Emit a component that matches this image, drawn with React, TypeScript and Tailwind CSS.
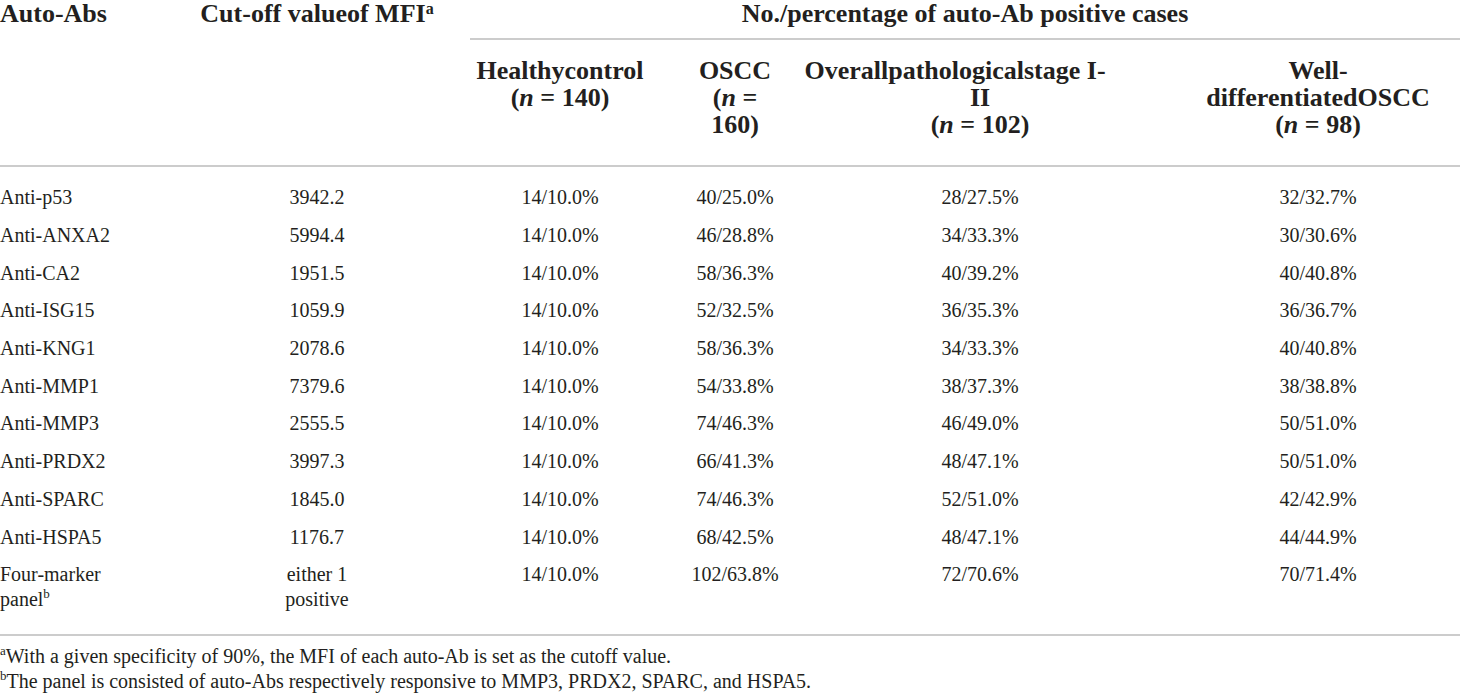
const rows: [string, string, string, string, string, string][] = [
  ['Anti-p53', '3942.2', '14/10.0%', '40/25.0%', '28/27.5%', '32/32.7%'],
  ['Anti-ANXA2', '5994.4', '14/10.0%', '46/28.8%', '34/33.3%', '30/30.6%'],
  ['Anti-CA2', '1951.5', '14/10.0%', '58/36.3%', '40/39.2%', '40/40.8%'],
  ['Anti-ISG15', '1059.9', '14/10.0%', '52/32.5%', '36/35.3%', '36/36.7%'],
  ['Anti-KNG1', '2078.6', '14/10.0%', '58/36.3%', '34/33.3%', '40/40.8%'],
  ['Anti-MMP1', '7379.6', '14/10.0%', '54/33.8%', '38/37.3%', '38/38.8%'],
  ['Anti-MMP3', '2555.5', '14/10.0%', '74/46.3%', '46/49.0%', '50/51.0%'],
  ['Anti-PRDX2', '3997.3', '14/10.0%', '66/41.3%', '48/47.1%', '50/51.0%'],
  ['Anti-SPARC', '1845.0', '14/10.0%', '74/46.3%', '52/51.0%', '42/42.9%'],
  ['Anti-HSPA5', '1176.7', '14/10.0%', '68/42.5%', '48/47.1%', '44/44.9%'],
];

const cols = 'grid grid-cols-[200px_234px_252px_98px_392px_284px]';

function N({ v }: { v: string }) {
  return (
    <>
      (<i>n</i> = {v})
    </>
  );
}

function Sup({ c }: { c: string }) {
  return <span className="text-[13px] leading-none align-[8px]">{c}</span>;
}

export default function App() {
  return (
    <div className="w-[1460px] h-[694px] bg-white text-[#231f20] font-['Liberation_Serif',serif] overflow-hidden">
      {/* header */}
      <div className={`${cols} text-[26px] leading-[27px] font-bold border-b-2 border-[#cccccc] pb-[27px]`}>
        <div className="row-span-2">Auto-Abs</div>
        <div className="row-span-2 text-center">
          Cut-off valueof MFI<span className="text-[16px] leading-none align-[8px]">a</span>
        </div>
        <div className="col-span-4 ml-[36px] text-center pb-[11px] border-b-2 border-[#cccccc]">
          No./percentage of auto-Ab positive cases
        </div>
        <div className="col-start-3 text-center pt-[17px]">
          Healthycontrol
          <br />
          <N v="140" />
        </div>
        <div className="text-center pt-[17px]">
          OSCC
          <br />
          (<i>n</i> =
          <br />
          160)
        </div>
        <div className="text-center pt-[17px]">
          <span className="inline-block -ml-[50px]">Overallpathologicalstage I-</span>
          <br />
          II
          <br />
          <N v="102" />
        </div>
        <div className="text-center pt-[17px]">
          Well-
          <br />
          differentiatedOSCC
          <br />
          <N v="98" />
        </div>
      </div>

      {/* body */}
      <div className="text-[20px] leading-[25px] pt-[12px] pb-[15px] border-b-2 border-[#cccccc]">
        {rows.map((r) => (
          <div key={r[0]} className={`${cols} py-[6.35px]`}>
            <div>{r[0]}</div>
            <div className="text-center">{r[1]}</div>
            <div className="text-center">{r[2]}</div>
            <div className="text-center">{r[3]}</div>
            <div className="text-center">{r[4]}</div>
            <div className="text-center">{r[5]}</div>
          </div>
        ))}
        <div className={`${cols} py-[6.35px]`}>
          <div>
            Four-marker
            <br />
            panel<Sup c="b" />
          </div>
          <div className="text-center">
            either 1
            <br />
            positive
          </div>
          <div className="text-center">14/10.0%</div>
          <div className="text-center">102/63.8%</div>
          <div className="text-center">72/70.6%</div>
          <div className="text-center">70/71.4%</div>
        </div>
      </div>

      {/* footnotes */}
      <div className="text-[20px] leading-[25px] pt-[8px]">
        <p>
          <Sup c="a" />With a given specificity of 90%, the MFI of each auto-Ab is set as the cutoff value.
        </p>
        <p>
          <Sup c="b" />The panel is consisted of auto-Abs respectively responsive to MMP3, PRDX2, SPARC, and HSPA5.
        </p>
      </div>
    </div>
  );
}
